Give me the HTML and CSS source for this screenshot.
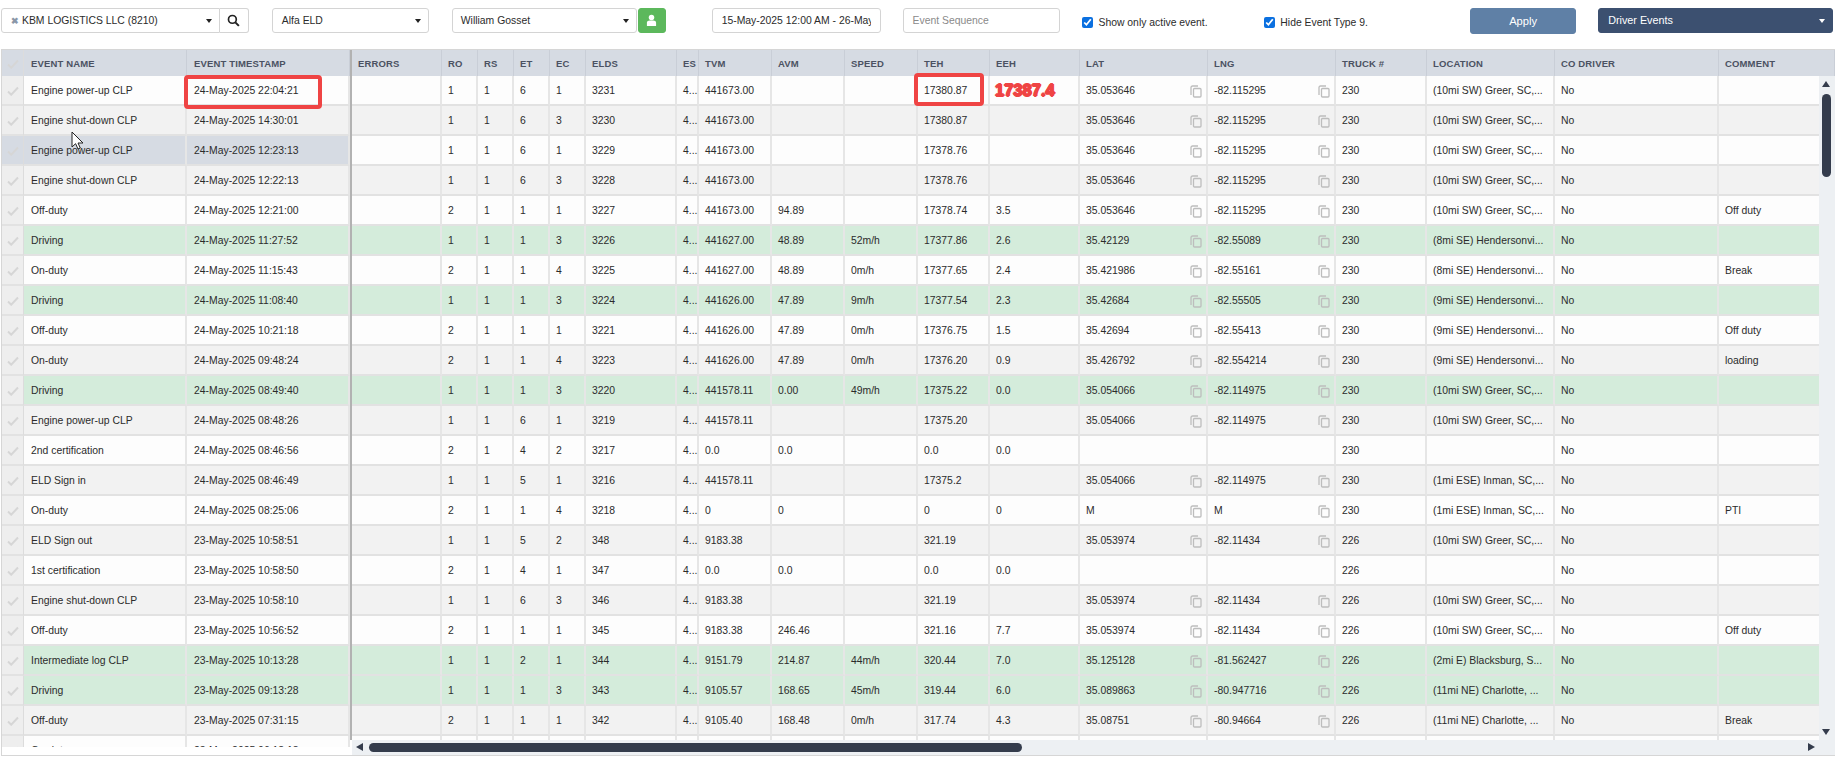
FILE: index.html
```html
<!DOCTYPE html>
<html lang="en">
<head>
<meta charset="utf-8">
<title>Driver Events</title>
<link rel="stylesheet" href="styles.css">
</head>
<body>
<svg class="defs" aria-hidden="true"><defs>
<symbol id="copy" viewBox="0 0 12 13"><path d="M8 1H2.500A1.500 1.500 0 0 0 1 2.500V10" fill="none"/><rect x="3.500" y="3.500" width="7.500" height="8.500" rx="1" fill="none"/></symbol>
<symbol id="tick" viewBox="0 0 12 10"><path d="M1 5.500l3.200 3.200L11 1.500" fill="none" stroke="#d6d6d6" stroke-width="2"/></symbol>
</defs></svg>
<header class="toolbar">
  <div class="select company"><span class="clear">&#10006;</span>KBM LOGISTICS LLC (8210)<i class="caret"></i></div>
  <button class="btn search" aria-label="Search"><svg viewBox="0 0 14 14" width="13" height="13"><circle cx="5.800" cy="5.800" r="4.200" fill="none" stroke="#222" stroke-width="1.800"/><path d="M9 9l3.800 3.800" stroke="#222" stroke-width="2.200"/></svg></button>
  <div class="select eld">Alfa ELD<i class="caret"></i></div>
  <div class="select driver">William Gosset<i class="caret"></i></div>
  <button class="btn person" aria-label="Driver"><svg viewBox="0 0 12 14" width="11" height="13"><circle cx="6" cy="3.800" r="3" fill="#fff"/><path d="M1 13V9.500C1 7.800 2.500 7 4 7h4c1.500 0 3 .8 3 2.500V13z" fill="#fff"/></svg></button>
  <div class="input date"><span class="clip">15-May-2025 12:00 AM - 26-May-2025</span></div>
  <div class="input sequence">Event Sequence</div>
  <label class="check active"><input type="checkbox" checked>Show only active event.</label>
  <label class="check hide"><input type="checkbox" checked>Hide Event Type 9.</label>
  <button class="btn apply">Apply</button>
  <div class="select events">Driver Events<i class="caret"></i></div>
</header>

<main class="grid">
  <section class="pane-left">
    <table class="tbl">
      <colgroup><col class="c-check"><col class="c-name"><col class="c-name"></colgroup>
      <thead><tr><th class="chk"><svg class="tick"><use href="#tick"/></svg></th><th>EVENT NAME</th><th>EVENT TIMESTAMP</th></tr></thead>
    </table>
    <div class="left-body">
    <table class="tbl">
      <colgroup><col class="c-check"><col class="c-name"><col class="c-name"></colgroup>
      <tbody>
        <tr><td class="chk"><svg class="tick"><use href="#tick"/></svg></td><td>Engine power-up CLP</td><td>24-May-2025 22:04:21</td></tr>
        <tr><td class="chk"><svg class="tick"><use href="#tick"/></svg></td><td>Engine shut-down CLP</td><td>24-May-2025 14:30:01</td></tr>
        <tr class="sel"><td class="chk"><svg class="tick"><use href="#tick"/></svg></td><td>Engine power-up CLP</td><td>24-May-2025 12:23:13</td></tr>
        <tr><td class="chk"><svg class="tick"><use href="#tick"/></svg></td><td>Engine shut-down CLP</td><td>24-May-2025 12:22:13</td></tr>
        <tr><td class="chk"><svg class="tick"><use href="#tick"/></svg></td><td>Off-duty</td><td>24-May-2025 12:21:00</td></tr>
        <tr class="drv"><td class="chk"><svg class="tick"><use href="#tick"/></svg></td><td>Driving</td><td>24-May-2025 11:27:52</td></tr>
        <tr><td class="chk"><svg class="tick"><use href="#tick"/></svg></td><td>On-duty</td><td>24-May-2025 11:15:43</td></tr>
        <tr class="drv"><td class="chk"><svg class="tick"><use href="#tick"/></svg></td><td>Driving</td><td>24-May-2025 11:08:40</td></tr>
        <tr><td class="chk"><svg class="tick"><use href="#tick"/></svg></td><td>Off-duty</td><td>24-May-2025 10:21:18</td></tr>
        <tr><td class="chk"><svg class="tick"><use href="#tick"/></svg></td><td>On-duty</td><td>24-May-2025 09:48:24</td></tr>
        <tr class="drv"><td class="chk"><svg class="tick"><use href="#tick"/></svg></td><td>Driving</td><td>24-May-2025 08:49:40</td></tr>
        <tr><td class="chk"><svg class="tick"><use href="#tick"/></svg></td><td>Engine power-up CLP</td><td>24-May-2025 08:48:26</td></tr>
        <tr><td class="chk"><svg class="tick"><use href="#tick"/></svg></td><td>2nd certification</td><td>24-May-2025 08:46:56</td></tr>
        <tr><td class="chk"><svg class="tick"><use href="#tick"/></svg></td><td>ELD Sign in</td><td>24-May-2025 08:46:49</td></tr>
        <tr><td class="chk"><svg class="tick"><use href="#tick"/></svg></td><td>On-duty</td><td>24-May-2025 08:25:06</td></tr>
        <tr><td class="chk"><svg class="tick"><use href="#tick"/></svg></td><td>ELD Sign out</td><td>23-May-2025 10:58:51</td></tr>
        <tr><td class="chk"><svg class="tick"><use href="#tick"/></svg></td><td>1st certification</td><td>23-May-2025 10:58:50</td></tr>
        <tr><td class="chk"><svg class="tick"><use href="#tick"/></svg></td><td>Engine shut-down CLP</td><td>23-May-2025 10:58:10</td></tr>
        <tr><td class="chk"><svg class="tick"><use href="#tick"/></svg></td><td>Off-duty</td><td>23-May-2025 10:56:52</td></tr>
        <tr class="drv"><td class="chk"><svg class="tick"><use href="#tick"/></svg></td><td>Intermediate log CLP</td><td>23-May-2025 10:13:28</td></tr>
        <tr class="drv"><td class="chk"><svg class="tick"><use href="#tick"/></svg></td><td>Driving</td><td>23-May-2025 09:13:28</td></tr>
        <tr><td class="chk"><svg class="tick"><use href="#tick"/></svg></td><td>Off-duty</td><td>23-May-2025 07:31:15</td></tr>
        <tr><td class="chk"><svg class="tick"><use href="#tick"/></svg></td><td>On-duty</td><td>23-May-2025 06:18:18</td></tr>
      </tbody>
    </table>
    </div>
  </section>

  <section class="pane-right">
    <div class="right-head">
    <table class="tbl wide">
      <colgroup><col class="c90"><col class="c36"><col class="c36"><col class="c36"><col class="c36"><col class="c91"><col class="c22"><col class="c73"><col class="c73"><col class="c73"><col class="c72"><col class="c90"><col class="c128"><col class="c128"><col class="c91"><col class="c128"><col class="c164"><col class="c116"></colgroup>
      <thead><tr><th>ERRORS</th><th>RO</th><th>RS</th><th>ET</th><th>EC</th><th>ELDS</th><th>ES</th><th>TVM</th><th>AVM</th><th>SPEED</th><th>TEH</th><th>EEH</th><th>LAT</th><th>LNG</th><th>TRUCK #</th><th>LOCATION</th><th>CO DRIVER</th><th>COMMENT</th></tr></thead>
    </table>
    </div>
    <div class="right-mid">
      <div class="right-body">
      <table class="tbl wide">
        <colgroup><col class="c90"><col class="c36"><col class="c36"><col class="c36"><col class="c36"><col class="c91"><col class="c22"><col class="c73"><col class="c73"><col class="c73"><col class="c72"><col class="c90"><col class="c128"><col class="c128"><col class="c91"><col class="c128"><col class="c164"><col class="c116"></colgroup>
        <tbody>
          <tr><td></td><td>1</td><td>1</td><td>6</td><td>1</td><td>3231</td><td>4...</td><td>441673.00</td><td></td><td></td><td>17380.87</td><td class="note-cell"><span class="note">17387.4</span></td><td class="cp">35.053646<svg class="copy"><use href="#copy"/></svg></td><td class="cp">-82.115295<svg class="copy"><use href="#copy"/></svg></td><td>230</td><td>(10mi SW) Greer, SC,...</td><td>No</td><td></td></tr>
          <tr><td></td><td>1</td><td>1</td><td>6</td><td>3</td><td>3230</td><td>4...</td><td>441673.00</td><td></td><td></td><td>17380.87</td><td></td><td class="cp">35.053646<svg class="copy"><use href="#copy"/></svg></td><td class="cp">-82.115295<svg class="copy"><use href="#copy"/></svg></td><td>230</td><td>(10mi SW) Greer, SC,...</td><td>No</td><td></td></tr>
          <tr><td></td><td>1</td><td>1</td><td>6</td><td>1</td><td>3229</td><td>4...</td><td>441673.00</td><td></td><td></td><td>17378.76</td><td></td><td class="cp">35.053646<svg class="copy"><use href="#copy"/></svg></td><td class="cp">-82.115295<svg class="copy"><use href="#copy"/></svg></td><td>230</td><td>(10mi SW) Greer, SC,...</td><td>No</td><td></td></tr>
          <tr><td></td><td>1</td><td>1</td><td>6</td><td>3</td><td>3228</td><td>4...</td><td>441673.00</td><td></td><td></td><td>17378.76</td><td></td><td class="cp">35.053646<svg class="copy"><use href="#copy"/></svg></td><td class="cp">-82.115295<svg class="copy"><use href="#copy"/></svg></td><td>230</td><td>(10mi SW) Greer, SC,...</td><td>No</td><td></td></tr>
          <tr><td></td><td>2</td><td>1</td><td>1</td><td>1</td><td>3227</td><td>4...</td><td>441673.00</td><td>94.89</td><td></td><td>17378.74</td><td>3.5</td><td class="cp">35.053646<svg class="copy"><use href="#copy"/></svg></td><td class="cp">-82.115295<svg class="copy"><use href="#copy"/></svg></td><td>230</td><td>(10mi SW) Greer, SC,...</td><td>No</td><td>Off duty</td></tr>
          <tr class="drv"><td></td><td>1</td><td>1</td><td>1</td><td>3</td><td>3226</td><td>4...</td><td>441627.00</td><td>48.89</td><td>52m/h</td><td>17377.86</td><td>2.6</td><td class="cp">35.42129<svg class="copy"><use href="#copy"/></svg></td><td class="cp">-82.55089<svg class="copy"><use href="#copy"/></svg></td><td>230</td><td>(8mi SE) Hendersonvi...</td><td>No</td><td></td></tr>
          <tr><td></td><td>2</td><td>1</td><td>1</td><td>4</td><td>3225</td><td>4...</td><td>441627.00</td><td>48.89</td><td>0m/h</td><td>17377.65</td><td>2.4</td><td class="cp">35.421986<svg class="copy"><use href="#copy"/></svg></td><td class="cp">-82.55161<svg class="copy"><use href="#copy"/></svg></td><td>230</td><td>(8mi SE) Hendersonvi...</td><td>No</td><td>Break</td></tr>
          <tr class="drv"><td></td><td>1</td><td>1</td><td>1</td><td>3</td><td>3224</td><td>4...</td><td>441626.00</td><td>47.89</td><td>9m/h</td><td>17377.54</td><td>2.3</td><td class="cp">35.42684<svg class="copy"><use href="#copy"/></svg></td><td class="cp">-82.55505<svg class="copy"><use href="#copy"/></svg></td><td>230</td><td>(9mi SE) Hendersonvi...</td><td>No</td><td></td></tr>
          <tr><td></td><td>2</td><td>1</td><td>1</td><td>1</td><td>3221</td><td>4...</td><td>441626.00</td><td>47.89</td><td>0m/h</td><td>17376.75</td><td>1.5</td><td class="cp">35.42694<svg class="copy"><use href="#copy"/></svg></td><td class="cp">-82.55413<svg class="copy"><use href="#copy"/></svg></td><td>230</td><td>(9mi SE) Hendersonvi...</td><td>No</td><td>Off duty</td></tr>
          <tr><td></td><td>2</td><td>1</td><td>1</td><td>4</td><td>3223</td><td>4...</td><td>441626.00</td><td>47.89</td><td>0m/h</td><td>17376.20</td><td>0.9</td><td class="cp">35.426792<svg class="copy"><use href="#copy"/></svg></td><td class="cp">-82.554214<svg class="copy"><use href="#copy"/></svg></td><td>230</td><td>(9mi SE) Hendersonvi...</td><td>No</td><td>loading</td></tr>
          <tr class="drv"><td></td><td>1</td><td>1</td><td>1</td><td>3</td><td>3220</td><td>4...</td><td>441578.11</td><td>0.00</td><td>49m/h</td><td>17375.22</td><td>0.0</td><td class="cp">35.054066<svg class="copy"><use href="#copy"/></svg></td><td class="cp">-82.114975<svg class="copy"><use href="#copy"/></svg></td><td>230</td><td>(10mi SW) Greer, SC,...</td><td>No</td><td></td></tr>
          <tr><td></td><td>1</td><td>1</td><td>6</td><td>1</td><td>3219</td><td>4...</td><td>441578.11</td><td></td><td></td><td>17375.20</td><td></td><td class="cp">35.054066<svg class="copy"><use href="#copy"/></svg></td><td class="cp">-82.114975<svg class="copy"><use href="#copy"/></svg></td><td>230</td><td>(10mi SW) Greer, SC,...</td><td>No</td><td></td></tr>
          <tr><td></td><td>2</td><td>1</td><td>4</td><td>2</td><td>3217</td><td>4...</td><td>0.0</td><td>0.0</td><td></td><td>0.0</td><td>0.0</td><td></td><td></td><td>230</td><td></td><td>No</td><td></td></tr>
          <tr><td></td><td>1</td><td>1</td><td>5</td><td>1</td><td>3216</td><td>4...</td><td>441578.11</td><td></td><td></td><td>17375.2</td><td></td><td class="cp">35.054066<svg class="copy"><use href="#copy"/></svg></td><td class="cp">-82.114975<svg class="copy"><use href="#copy"/></svg></td><td>230</td><td>(1mi ESE) Inman, SC,...</td><td>No</td><td></td></tr>
          <tr><td></td><td>2</td><td>1</td><td>1</td><td>4</td><td>3218</td><td>4...</td><td>0</td><td>0</td><td></td><td>0</td><td>0</td><td class="cp">M<svg class="copy"><use href="#copy"/></svg></td><td class="cp">M<svg class="copy"><use href="#copy"/></svg></td><td>230</td><td>(1mi ESE) Inman, SC,...</td><td>No</td><td>PTI</td></tr>
          <tr><td></td><td>1</td><td>1</td><td>5</td><td>2</td><td>348</td><td>4...</td><td>9183.38</td><td></td><td></td><td>321.19</td><td></td><td class="cp">35.053974<svg class="copy"><use href="#copy"/></svg></td><td class="cp">-82.11434<svg class="copy"><use href="#copy"/></svg></td><td>226</td><td>(10mi SW) Greer, SC,...</td><td>No</td><td></td></tr>
          <tr><td></td><td>2</td><td>1</td><td>4</td><td>1</td><td>347</td><td>4...</td><td>0.0</td><td>0.0</td><td></td><td>0.0</td><td>0.0</td><td></td><td></td><td>226</td><td></td><td>No</td><td></td></tr>
          <tr><td></td><td>1</td><td>1</td><td>6</td><td>3</td><td>346</td><td>4...</td><td>9183.38</td><td></td><td></td><td>321.19</td><td></td><td class="cp">35.053974<svg class="copy"><use href="#copy"/></svg></td><td class="cp">-82.11434<svg class="copy"><use href="#copy"/></svg></td><td>226</td><td>(10mi SW) Greer, SC,...</td><td>No</td><td></td></tr>
          <tr><td></td><td>2</td><td>1</td><td>1</td><td>1</td><td>345</td><td>4...</td><td>9183.38</td><td>246.46</td><td></td><td>321.16</td><td>7.7</td><td class="cp">35.053974<svg class="copy"><use href="#copy"/></svg></td><td class="cp">-82.11434<svg class="copy"><use href="#copy"/></svg></td><td>226</td><td>(10mi SW) Greer, SC,...</td><td>No</td><td>Off duty</td></tr>
          <tr class="drv"><td></td><td>1</td><td>1</td><td>2</td><td>1</td><td>344</td><td>4...</td><td>9151.79</td><td>214.87</td><td>44m/h</td><td>320.44</td><td>7.0</td><td class="cp">35.125128<svg class="copy"><use href="#copy"/></svg></td><td class="cp">-81.562427<svg class="copy"><use href="#copy"/></svg></td><td>226</td><td>(2mi E) Blacksburg, S...</td><td>No</td><td></td></tr>
          <tr class="drv"><td></td><td>1</td><td>1</td><td>1</td><td>3</td><td>343</td><td>4...</td><td>9105.57</td><td>168.65</td><td>45m/h</td><td>319.44</td><td>6.0</td><td class="cp">35.089863<svg class="copy"><use href="#copy"/></svg></td><td class="cp">-80.947716<svg class="copy"><use href="#copy"/></svg></td><td>226</td><td>(11mi NE) Charlotte, ...</td><td>No</td><td></td></tr>
          <tr><td></td><td>2</td><td>1</td><td>1</td><td>1</td><td>342</td><td>4...</td><td>9105.40</td><td>168.48</td><td>0m/h</td><td>317.74</td><td>4.3</td><td class="cp">35.08751<svg class="copy"><use href="#copy"/></svg></td><td class="cp">-80.94664<svg class="copy"><use href="#copy"/></svg></td><td>226</td><td>(11mi NE) Charlotte, ...</td><td>No</td><td>Break</td></tr>
          <tr><td></td><td></td><td></td><td></td><td></td><td></td><td></td><td></td><td></td><td></td><td></td><td></td><td></td><td></td><td></td><td></td><td></td><td></td></tr>
        </tbody>
      </table>
      </div>
      <div class="vbar"><i class="arrow up"></i><i class="vthumb"></i><i class="arrow down"></i></div>
    </div>
    <div class="hbar"><i class="arrow left"></i><i class="hthumb"></i><i class="arrow right"></i></div>
  </section>
</main>

<div class="mark mark-ts"></div>
<div class="mark mark-teh"></div>
<svg class="cursor" viewBox="0 0 14 20" width="14" height="20" aria-hidden="true"><path d="M1 1v15l3.600-3.300L7 18l2.300-1-2.300-5h5z" fill="#fff" stroke="#222" stroke-width="1"/></svg>
</body>
</html>
```
FILE: styles.css
```css
* { box-sizing: border-box; }
html, body { margin: 0; padding: 0; height: 100%; }
body {
  position: relative;
  width: 1835px;
  height: 766px;
  overflow: hidden;
  background: #fff;
  font-family: "Liberation Sans", Arial, sans-serif;
  font-size: 10.4px;
  color: #2b2b2b;
}
.defs { position: absolute; width: 0; height: 0; }

/* toolbar */
.toolbar {
  display: flex;
  align-items: flex-start;
  height: 49px;
  padding: 8px 2px 0 1px;
}
.select, .input {
  position: relative;
  display: block;
  height: 25px;
  line-height: 23px;
  padding: 0 9px;
  background: #fff;
  border: 1px solid #d4d4d4;
  border-radius: 3px;
  color: #2b2b2b;
  white-space: nowrap;
  overflow: hidden;
}
.clip { display: block; overflow: hidden; }
.caret {
  position: absolute;
  right: 7px;
  top: 10px;
  border: 3.5px solid transparent;
  border-top: 4px solid #222;
  border-bottom: 0;
}
.btn {
  display: flex;
  align-items: center;
  justify-content: center;
  height: 25px;
  padding: 0;
  border: 1px solid #d4d4d4;
  border-radius: 3px;
  background: #fff;
  font: inherit;
}
.company { width: 219px; border-radius: 3px 0 0 3px; }
.clear { display: inline-block; width: 11px; color: #8a97a8; font-size: 9px; font-weight: bold; }
.search { width: 29px; border-left: 0; border-radius: 0 3px 3px 0; }
.eld { width: 157px; margin-left: 23px; }
.driver { width: 185px; margin-left: 23px; padding-left: 8px; }
.person { width: 28px; margin-left: 1px; background: #5cb85c; border-color: #5cb85c; }
.date { width: 169px; margin-left: 46px; }
.sequence { width: 158px; margin-left: 22px; color: #8a8a8a; }
.check {
  display: flex;
  align-items: center;
  height: 25px;
  margin-top: 2px;
  color: #2b2b2b;
}
.check input { width: 11px; height: 11px; margin: 0 5px 0 0; accent-color: #0b70e0; }
.active { width: 182px; margin-left: 22px; }
.hide { width: 206px; }
.apply {
  width: 106px;
  height: 26px;
  background: #5f80a6;
  border-color: #5f80a6;
  color: #fff;
  font-size: 11.2px;
}
.events {
  width: 235px;
  margin-left: 22px;
  background: #3c5070;
  border-color: #3c5070;
  color: #fff;
  font-size: 10.8px;
}
.events .caret { border-top-color: #fff; }

/* grid */
.grid {
  display: flex;
  width: 1834px;
  height: 707px;
  margin-left: 1px;
  border: 1px solid #d6d6d6;
  border-right: 0;
  overflow: hidden;
}
.pane-left {
  position: relative;
  flex: none;
  width: 350px;
  display: flex;
  flex-direction: column;
}
.pane-left::after {
  content: "";
  position: absolute;
  top: 0;
  right: 0;
  width: 2px;
  height: 690px;
  background: #b2b2b2;
}
.left-body { height: 671px; overflow: hidden; }
.pane-left td, .pane-left th { padding-left: 7px; }
.pane-left td.chk, .pane-left th.chk { padding: 0; }
.pane-right {
  flex: 1;
  min-width: 0;
  display: flex;
  flex-direction: column;
}
.right-head { flex: none; overflow: hidden; background: #d6dbe3; }
.right-mid { flex: 1; min-height: 0; display: flex; }
.right-body { flex: 1; min-width: 0; overflow: hidden; }

.tbl { border-collapse: separate; border-spacing: 0; table-layout: fixed; width: 348px; }
.wide { width: 1483px; }
.c-check { width: 22px; }
.c-name { width: 163px; }
.c90 { width: 90px; }
.c91 { width: 91px; }
.c36 { width: 36px; }
.c22 { width: 22px; }
.c73 { width: 73px; }
.c72 { width: 72px; }
.c128 { width: 128px; }
.c164 { width: 164px; }
.c116 { width: 116px; }

th {
  height: 26px;
  padding: 0 0 0 6px;
  background: #d6dbe3;
  border-right: 1px solid #c9ced7;
  color: #4b5262;
  font-size: 9.5px;
  font-weight: bold;
  letter-spacing: .15px;
  text-align: left;
  white-space: nowrap;
  overflow: hidden;
}
td {
  position: relative;
  height: 30px;
  padding: 1px 0 0 6px;
  border-right: 2px solid #e6e6e6;
  border-bottom: 2px solid #e2e2e2;
  white-space: nowrap;
  overflow: hidden;
}
tbody tr { background: #fdfdfd; }
tbody tr:nth-child(even) { background: #f2f2f2; }
tbody tr.drv { background: #d4ecdb; }
tbody tr.sel { background: #d6dbe3; }
.chk {
  text-align: center;
  background: #eeeeee;
  border-right: 1px solid #dcdcdc;
}
th.chk { background: #d6dbe3; }
.tick { display: inline-block; width: 12px; height: 10px; vertical-align: middle; }
tr.sel .chk { background: #d6dbe3; }

.copy {
  position: absolute;
  right: 4px;
  top: 9px;
  width: 12px;
  height: 13px;
  stroke: #bdbdbd;
  stroke-width: 1.300;
}

/* annotations lying over the table */
td.note-cell { overflow: visible; }
.mark {
  position: absolute;
  border: 4px solid #ef4444;
  border-radius: 4px;
}
.mark-ts { left: 184px; top: 75px; width: 138px; height: 34px; }
.mark-teh { left: 914px; top: 73px; width: 70px; height: 33px; }
.note {
  margin-left: -1px;
  font-size: 16.5px;
  font-weight: bold;
  color: #ef4444;
  -webkit-text-stroke: 3px #fff;
  paint-order: stroke fill;
  text-shadow: 1px 0 #ef4444, -1px 0 #ef4444, 0 1px #ef4444, 0 -1px #ef4444;
}

/* custom scrollbars */
.vbar {
  position: relative;
  flex: none;
  width: 16px;
  background: #edf0f3;
}
.hbar {
  position: relative;
  flex: none;
  height: 15px;
  background: #edf0f3;
}
.vthumb {
  position: absolute;
  left: 3px;
  top: 18px;
  width: 9px;
  height: 83px;
  border-radius: 5px;
  background: #343c4c;
}
.hthumb {
  position: absolute;
  left: 17px;
  top: 3px;
  width: 653px;
  height: 9px;
  border-radius: 5px;
  background: #343c4c;
}
.arrow { position: absolute; width: 0; height: 0; border: 4px solid transparent; }
.up { left: 3px; top: 5px; border-bottom: 6px solid #343c4c; border-top: 0; }
.down { left: 3px; bottom: 5px; border-top: 6px solid #343c4c; border-bottom: 0; }
.left { left: 4px; top: 3px; border-width: 4.500px; border-right: 7px solid #343c4c; border-left: 0; }
.right { right: 20px; top: 3px; border-width: 4.500px; border-left: 7px solid #343c4c; border-right: 0; }

.cursor { position: absolute; left: 71px; top: 131px; }
```
